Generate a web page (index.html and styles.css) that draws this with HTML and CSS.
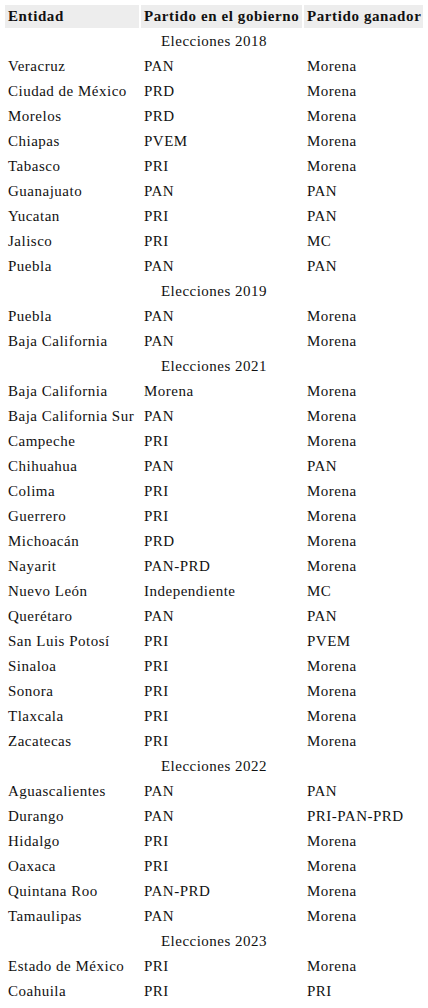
FILE: index.html
```html
<!DOCTYPE html>
<html lang="es">
<head>
<meta charset="utf-8">
<link rel="stylesheet" href="styles.css">
</head>
<body>
<table class="results">
<thead>
<tr><th class="c1">Entidad</th><th class="c2">Partido en el gobierno</th><th class="c3">Partido ganador</th></tr>
</thead>
<tbody>
<tr class="year"><td colspan="3">Elecciones 2018</td></tr>
<tr><td>Veracruz</td><td>PAN</td><td>Morena</td></tr>
<tr><td>Ciudad de México</td><td>PRD</td><td>Morena</td></tr>
<tr><td>Morelos</td><td>PRD</td><td>Morena</td></tr>
<tr><td>Chiapas</td><td>PVEM</td><td>Morena</td></tr>
<tr><td>Tabasco</td><td>PRI</td><td>Morena</td></tr>
<tr><td>Guanajuato</td><td>PAN</td><td>PAN</td></tr>
<tr><td>Yucatan</td><td>PRI</td><td>PAN</td></tr>
<tr><td>Jalisco</td><td>PRI</td><td>MC</td></tr>
<tr><td>Puebla</td><td>PAN</td><td>PAN</td></tr>
<tr class="year"><td colspan="3">Elecciones 2019</td></tr>
<tr><td>Puebla</td><td>PAN</td><td>Morena</td></tr>
<tr><td>Baja California</td><td>PAN</td><td>Morena</td></tr>
<tr class="year"><td colspan="3">Elecciones 2021</td></tr>
<tr><td>Baja California</td><td>Morena</td><td>Morena</td></tr>
<tr><td>Baja California Sur</td><td>PAN</td><td>Morena</td></tr>
<tr><td>Campeche</td><td>PRI</td><td>Morena</td></tr>
<tr><td>Chihuahua</td><td>PAN</td><td>PAN</td></tr>
<tr><td>Colima</td><td>PRI</td><td>Morena</td></tr>
<tr><td>Guerrero</td><td>PRI</td><td>Morena</td></tr>
<tr><td>Michoacán</td><td>PRD</td><td>Morena</td></tr>
<tr><td>Nayarit</td><td>PAN-PRD</td><td>Morena</td></tr>
<tr><td>Nuevo León</td><td>Independiente</td><td>MC</td></tr>
<tr><td>Querétaro</td><td>PAN</td><td>PAN</td></tr>
<tr><td>San Luis Potosí</td><td>PRI</td><td>PVEM</td></tr>
<tr><td>Sinaloa</td><td>PRI</td><td>Morena</td></tr>
<tr><td>Sonora</td><td>PRI</td><td>Morena</td></tr>
<tr><td>Tlaxcala</td><td>PRI</td><td>Morena</td></tr>
<tr><td>Zacatecas</td><td>PRI</td><td>Morena</td></tr>
<tr class="year"><td colspan="3">Elecciones 2022</td></tr>
<tr><td>Aguascalientes</td><td>PAN</td><td>PAN</td></tr>
<tr><td>Durango</td><td>PAN</td><td>PRI-PAN-PRD</td></tr>
<tr><td>Hidalgo</td><td>PRI</td><td>Morena</td></tr>
<tr><td>Oaxaca</td><td>PRI</td><td>Morena</td></tr>
<tr><td>Quintana Roo</td><td>PAN-PRD</td><td>Morena</td></tr>
<tr><td>Tamaulipas</td><td>PAN</td><td>Morena</td></tr>
<tr class="year"><td colspan="3">Elecciones 2023</td></tr>
<tr><td>Estado de México</td><td>PRI</td><td>Morena</td></tr>
<tr><td>Coahuila</td><td>PRI</td><td>PRI</td></tr>
</tbody>
</table>
</body>
</html>
```
FILE: styles.css
```css
html, body {
  margin: 0;
  padding: 0;
  background: #fff;
}
body {
  padding: 3px;
  font-family: "Liberation Serif", "Times New Roman", serif;
  font-size: 15px;
  letter-spacing: 0.5px;
  color: #111;
}
.results {
  border-collapse: separate;
  border-spacing: 2px;
  width: 422px;
  table-layout: fixed;
}
.results th,
.results td {
  height: 23px;
  padding: 0 0 0 3px;
  text-align: left;
  vertical-align: middle;
  white-space: nowrap;
  line-height: 17px;
}
.results th {
  background: #ededed;
  font-weight: bold;
  letter-spacing: 0.6px;
}
.c1 { width: 131px; }
.c2 { width: 158px; }
.c3 { width: 116px; }
.results .year td {
  text-align: center;
  padding: 0;
}
```
